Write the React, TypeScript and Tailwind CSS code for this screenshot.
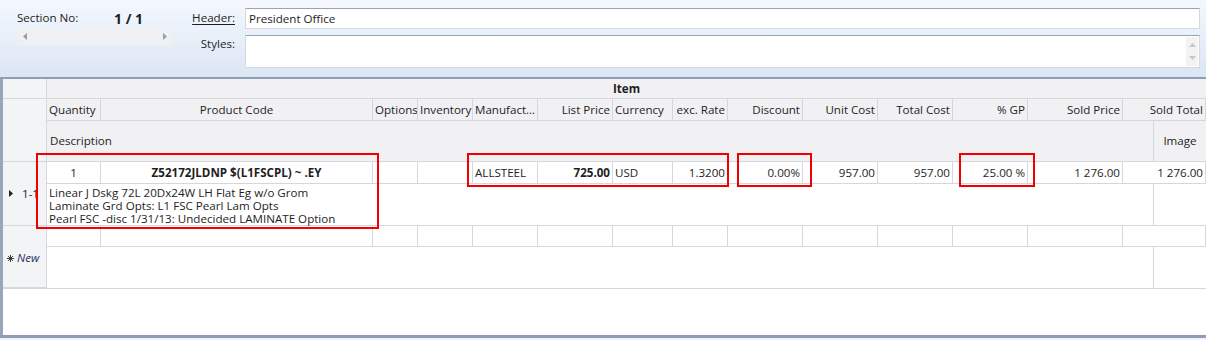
import React from "react";

const cols: { label: string; w: number; align: "left" | "center" | "right" }[] = [
  { label: "Quantity", w: 54, align: "left" },
  { label: "Product Code", w: 272, align: "center" },
  { label: "Options", w: 45, align: "left" },
  { label: "Inventory", w: 55, align: "left" },
  { label: "Manufact…", w: 65, align: "left" },
  { label: "List Price", w: 75, align: "right" },
  { label: "Currency", w: 60, align: "left" },
  { label: "exc. Rate", w: 55, align: "right" },
  { label: "Discount", w: 75, align: "right" },
  { label: "Unit Cost", w: 75, align: "right" },
  { label: "Total Cost", w: 75, align: "right" },
  { label: "% GP", w: 75, align: "right" },
  { label: "Sold Price", w: 95, align: "right" },
  { label: "Sold Total", w: 83, align: "right" },
];

const data: { v: string; bold?: boolean; align: "left" | "center" | "right" }[] = [
  { v: "1", align: "center" },
  { v: "Z52172JLDNP $(L1FSCPL) ~ .EY", bold: true, align: "center" },
  { v: "", align: "left" },
  { v: "", align: "left" },
  { v: "ALLSTEEL", align: "left" },
  { v: "725.00", bold: true, align: "right" },
  { v: "USD", align: "left" },
  { v: "1.3200", align: "right" },
  { v: "0.00%", align: "right" },
  { v: "957.00", align: "right" },
  { v: "957.00", align: "right" },
  { v: "25.00 %", align: "right" },
  { v: "1 276.00", align: "right" },
  { v: "1 276.00", align: "right" },
];

const alignCls = (a: string) =>
  a === "center" ? "justify-center" : a === "right" ? "justify-end" : "justify-start";

function Asterisk() {
  return (
    <svg width="7" height="7" viewBox="0 0 8 8" className="shrink-0">
      <g stroke="#333" strokeWidth="1.1">
        <line x1="4" y1="0" x2="4" y2="8" />
        <line x1="0" y1="4" x2="8" y2="4" />
        <line x1="1.2" y1="1.2" x2="6.8" y2="6.8" />
        <line x1="6.8" y1="1.2" x2="1.2" y2="6.8" />
      </g>
    </svg>
  );
}

export default function App() {
  return (
    <div className="relative w-[1206px] h-[340px] overflow-hidden bg-white text-[11.6px] text-[#1e1e1e] font-['Segoe_UI','Open_Sans',sans-serif]">
      {/* Top panel */}
      <div className="h-[79px] border-b-2 border-[#8e9cb6] bg-gradient-to-b from-[#f4f8fe] to-[#dbe6f3] flex">
        <div className="w-[245px] shrink-0 flex">
          <div className="w-[176px] pl-[17px] pt-[9px]">
            <div className="flex items-center h-[18px]">
              <span className="w-[97px]">Section No:</span>
              <span className="font-bold text-[14px]">1 / 1</span>
            </div>
            <div className="mt-[1px] h-[17px] w-[156px] bg-[#eef0f3] flex items-center justify-between px-[6px]">
              <svg width="4" height="7" viewBox="0 0 4 7"><path d="M4 0 L0 3.5 L4 7 Z" fill="#9a9ea6" /></svg>
              <svg width="4" height="7" viewBox="0 0 4 7"><path d="M0 0 L4 3.5 L0 7 Z" fill="#9a9ea6" /></svg>
            </div>
          </div>
          <div className="flex-1 flex flex-col items-end pr-[10px] pt-[9px]">
            <div className="h-[18px] flex items-center underline underline-offset-2">Header:</div>
            <div className="h-[18px] mt-[8px] flex items-center">Styles:</div>
          </div>
        </div>
        <div className="flex-1 pr-[6px] pt-[8px] flex flex-col gap-[6px]">
          <div className="h-[21px] bg-white border border-[#d3d9e1] border-t-[#98a3b3] flex items-center pl-[3px]">
            President Office
          </div>
          <div className="h-[33px] bg-white border border-[#d3d9e1] border-t-[#98a3b3] flex justify-end p-[1px]">
            <div className="w-[12px] bg-[#f3f3f4] flex flex-col items-center justify-between py-[6px]">
              <svg width="7" height="4" viewBox="0 0 7 4"><path d="M0 4 L3.5 0 L7 4 Z" fill="#c5c8cd" /></svg>
              <svg width="7" height="4" viewBox="0 0 7 4"><path d="M0 0 L3.5 4 L7 0 Z" fill="#c5c8cd" /></svg>
            </div>
          </div>
        </div>
      </div>

      {/* Grid */}
      <div className="h-[256px] border-l-[3px] border-[#97a5be] flex">
        {/* indicator column */}
        <div className="w-[44px] shrink-0 flex flex-col">
          <div className="h-[20px] bg-[#f3f4f6] border-b border-r border-[#d5d7dd]" />
          <div className="h-[63px] bg-[#f3f4f6] border-b border-r border-[#d5d7dd]" />
          <div className="h-[64px] bg-[#f3f4f6] border-b border-r border-[#d5d7dd] flex items-center pl-[6px] gap-[9px]">
            <svg width="4" height="7" viewBox="0 0 4 7"><path d="M0 0 L4 3.5 L0 7 Z" fill="#222" /></svg>
            <span>1-1</span>
          </div>
          <div className="h-[62px] bg-[#f3f4f6] border-b border-r border-[#d5d7dd] flex items-center pl-[4px] gap-[3px] pt-[3px]">
            <Asterisk />
            <span className="italic text-[#1f3564]">New</span>
          </div>
        </div>
        {/* columns */}
        <div className="flex-1 flex flex-col min-w-0">
          <div className="h-[20px] bg-[#f1f1f3] border-b border-[#d5d7dd] flex items-center justify-center font-bold">
            Item
          </div>
          <div className="h-[22px] bg-[#f1f1f3] border-b border-[#d5d7dd] flex">
            {cols.map((c, i) => (
              <div
                key={i}
                style={{ width: c.w }}
                className={`shrink-0 h-full border-r border-[#d5d7dd] flex items-center px-[2px] whitespace-nowrap overflow-hidden ${alignCls(c.align)}`}
              >
                {c.label}
              </div>
            ))}
          </div>
          <div className="h-[41px] bg-[#f1f1f3] border-b border-[#d5d7dd] flex">
            <div className="flex-1 flex items-center pl-[3px]">Description</div>
            <div className="w-[53px] border-l border-[#d5d7dd] flex items-center justify-center">Image</div>
          </div>
          <div className="h-[22px] border-b border-[#d5d7dd] flex">
            {data.map((c, i) => (
              <div
                key={i}
                style={{ width: cols[i].w }}
                className={`shrink-0 h-full border-r border-[#d5d7dd] flex items-center px-[2px] whitespace-nowrap overflow-hidden ${alignCls(c.align)} ${c.bold ? "font-bold" : ""}`}
              >
                {c.v}
              </div>
            ))}
          </div>
          <div className="h-[42px] border-b border-[#d5d7dd] flex">
            <div className="flex-1 pl-[2px] pt-[2px] leading-[13px]">
              <div>Linear J Dskg 72L 20Dx24W LH Flat Eg w/o Grom</div>
              <div>Laminate Grd Opts: L1 FSC Pearl Lam Opts</div>
              <div>Pearl FSC -disc 1/31/13: Undecided LAMINATE Option</div>
            </div>
            <div className="w-[53px] border-l border-[#d5d7dd]" />
          </div>
          <div className="h-[21px] border-b border-[#d5d7dd] flex">
            {cols.map((c, i) => (
              <div key={i} style={{ width: c.w }} className="shrink-0 h-full border-r border-[#d5d7dd]" />
            ))}
          </div>
          <div className="h-[41px] flex">
            <div className="flex-1" />
            <div className="w-[53px] border-l border-[#d5d7dd]" />
          </div>
        </div>
      </div>
      <div className="h-[1px] bg-[#d5d7dd] -mt-[47px] ml-[3px]" />
      <div className="h-[46px]" />
      <div className="h-[3px] bg-[#8e9cb6]" />
      <div className="h-[2px] bg-[#eef4f8]" />

      {/* Red annotation boxes */}
      <div className="absolute left-[36px] top-[153px] w-[343px] h-[76px] border-2 border-[#f00000]" />
      <div className="absolute left-[467px] top-[153px] w-[262px] h-[34px] border-2 border-[#f00000]" />
      <div className="absolute left-[737px] top-[153px] w-[75px] h-[34px] border-2 border-[#f00000]" />
      <div className="absolute left-[959px] top-[153px] w-[76px] h-[34px] border-2 border-[#f00000]" />
    </div>
  );
}
